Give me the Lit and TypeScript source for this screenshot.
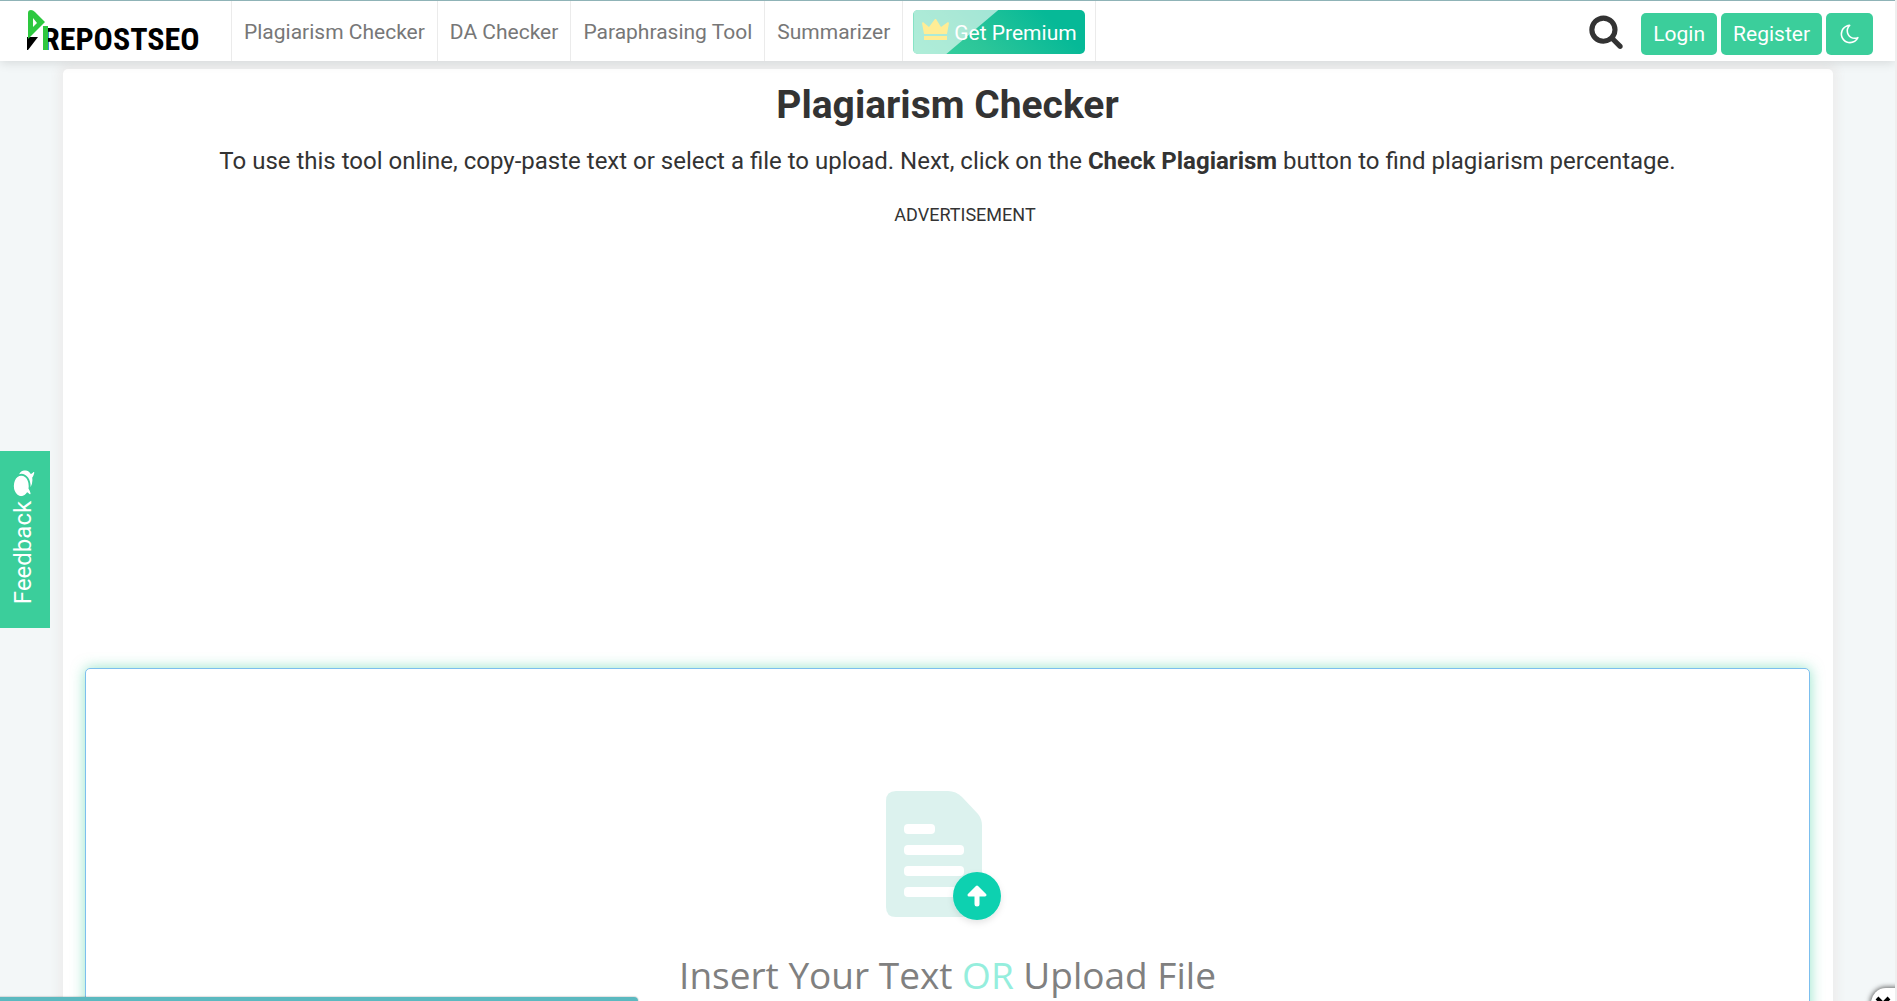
import { LitElement, html, css, svg } from "lit";
import { customElement } from "lit/decorators.js";

const SEARCH = "M1216 832q0-185-131.5-316.5t-316.5-131.5-316.5 131.5-131.5 316.5 131.5 316.5 316.5 131.5 316.5-131.5 131.5-316.5zm512 832q0 52-38 90t-90 38q-54 0-90-38l-343-342q-179 124-399 124-143 0-273.5-55.5t-225-150-150-225-55.5-273.5 55.5-273.5 150-225 225-150 273.5-55.5 273.5 55.5 225 150 150 225 55.5 273.5q0 220-124 399l343 343q37 37 37 90z";
const MOON = "M1390 1303q-54 9-110 9-182 0-337-90t-245-245-90-337q0-192 104-357-201 60-328.5 229t-127.5 384q0 130 51 248.5t136.5 204 204 136.5 248.5 51q144 0 273.5-61.5t220.5-171.5zm203-85q-94 203-283.5 324.5t-413.5 121.5q-156 0-298-61t-245-164-164-245-61-298q0-153 57.5-292.5t156-241.5 235.5-164.5 290-68.5q44-2 61 39 18 41-15 72-86 78-131.5 181.5t-45.5 218.5q0 148 73 273t198 198 273 73q118 0 228-51 41-18 72 13 14 14 17.5 34t-4.5 38z";
const COMMENTS = "M1408 768q0 139-94 257t-256.5 186.5-353.5 68.5q-86 0-176-16-124 88-278 128-36 9-86 16h-3q-11 0-20.5-8t-11.5-21q-1-3-1-6.5t.5-6.5 2-6l2.5-5 3.5-5.5 4-5 4.5-5 4-4.5q5-6 23-25t26-29.5 22.5-29 25-38.5 20.5-44q-124-72-195-177t-71-224q0-139 94-257t256.5-186.5 353.5-68.5 353.5 68.5 256.5 186.5 94 257zm384 256q0 120-71 224.5t-195 176.5q10 24 20.5 44t25 38.5 22.5 29 26 29.5 23 25q1 1 4 4.5t4.5 5 4 5 3.5 5.5l2.5 5 2 6 .5 6.5-1 6.5q-3 14-13 22t-22 7q-50-7-86-16-154-40-278-128-90 16-176 16-271 0-472-132 58 4 88 4 161 0 309-45t264-129q125-92 192-212t67-254q0-77-23-152 129 71 204 178t75 230z";

const icon = (d: string, cls: string) => html`
  <svg class=${cls} viewBox="0 0 1792 1792" aria-hidden="true">${svg`<path d=${d} fill="currentColor"></path>`}</svg>`;

@customElement("site-header")
class SiteHeader extends LitElement {
  static styles = css`
    :host { display: block; position: relative; z-index: 2; }
    .bar {
      display: flex; align-items: stretch; height: 61px; box-sizing: border-box;
      background: #fff; border-top: 1px solid #8fb3b7;
      box-shadow: 0 2px 10px rgba(0, 0, 0, 0.12);
      padding: 0 22px 0 27px;
    }
    .logo { display: flex; align-items: flex-start; width: 204px; box-sizing: border-box; padding-top: 8px; }
    .logo svg { display: block; flex: none; }
    .word { font: bold 32px "Liberation Sans Narrow", "Roboto Condensed", "Liberation Sans", sans-serif; }
    nav { display: flex; flex: 1; border-left: 1px solid #ebebeb; }
    .link {
      display: flex; align-items: center; padding: 2px 12px 0; color: #777;
      text-decoration: none; border-right: 1px solid #ebebeb; font-size: 21px; white-space: nowrap;
    }
    .promo { display: flex; align-items: flex-start; padding: 9px 10px 0; border-right: 1px solid #ebebeb; }
    .premium {
      position: relative; display: flex; align-items: center; gap: 4px; height: 44px; box-sizing: border-box;
      padding: 2px 8px 0; border-radius: 5px; color: #fff; font-size: 21px; text-decoration: none;
      overflow: hidden; white-space: nowrap;
      background: linear-gradient(45deg, #38d39f 0%, #2cc699 35%, #06b997 80%);
    }
    .premium::before {
      content: ""; position: absolute; inset: 0; background: rgba(255, 255, 255, 0.6);
      clip-path: polygon(0 0, 85px 0, 33px 100%, 0 100%);
    }
    .crown { position: relative; width: 29px; height: 24px; margin-bottom: 6px; }
    .tag { position: relative; }
    .actions { display: flex; align-items: flex-start; gap: 4px; padding-top: 12px; }
    button, .btn {
      display: flex; align-items: center; justify-content: center; height: 42px; box-sizing: border-box;
      border: 0; border-radius: 5px; background: #3bce9b; color: #fff;
      font: 21px Roboto, sans-serif; text-decoration: none; padding: 0 12px;
    }
    .find { background: none; color: #333; padding: 0; margin-right: 13px; height: 36px; }
    .lens { width: 36px; height: 36px; }
    .theme { width: 47px; }
    .moon { width: 22px; height: 22px; flex: none; }
  `;
  render() {
    return html`
      <header class="bar">
        <a class="logo" href="#" aria-label="Prepostseo">
          <svg width="190" height="52" viewBox="0 0 190 52">
            <text class="word" x="15" y="41" fill="#000">REPOSTSEO</text>
            <path d="M0 28 H11 L1 41 H0 Z" fill="#000"></path>
            <path fill-rule="evenodd" fill="#2dc83f" d="M1 30 V4 Q1 1 4 1 Q6 1 8 3 L18 13 L1 30 Z M6 9 V18 L10 14 Z"></path>
            <path d="M16 17 H21 V41 H16 Z" fill="#2dc83f"></path>
          </svg>
        </a>
        <nav>
          <a class="link" href="#">Plagiarism Checker</a>
          <a class="link" href="#">DA Checker</a>
          <a class="link" href="#">Paraphrasing Tool</a>
          <a class="link" href="#">Summarizer</a>
          <div class="promo">
            <a class="premium" href="#">
              <svg class="crown" viewBox="0 0 29 24" fill="#ffed95" aria-hidden="true">
                <path d="M3 16 L1 5 L2 4 L8 9 L14 1 L15 1 L20 9 L27 4 L28 5 L26 16 Z M3 18 H26 V22 H3 Z"></path>
              </svg>
              <span class="tag">Get Premium</span>
            </a>
          </div>
        </nav>
        <div class="actions">
          <button class="find" aria-label="Search">${icon(SEARCH, "lens")}</button>
          <a class="btn" href="#">Login</a>
          <a class="btn" href="#">Register</a>
          <button class="theme" aria-label="Dark mode">${icon(MOON, "moon")}</button>
        </div>
      </header>`;
  }
}

@customElement("upload-box")
class UploadBox extends LitElement {
  static styles = css`
    :host { display: block; }
    .box {
      display: grid; min-height: 480px; background: #fff; border: 1px solid #7cbfee; border-radius: 5px;
      box-shadow: 0 0 14px rgba(59, 206, 155, 0.55);
    }
    .box > * { grid-area: 1 / 1; }
    textarea { border: 0; outline: 0; resize: none; background: none; padding: 16px; font: 20px Roboto, sans-serif; }
    .hint {
      display: flex; flex-direction: column; align-items: center; padding-top: 116px; pointer-events: none;
    }
    .file { width: 156px; height: 144px; display: block; }
    .caption {
      margin-top: 19px; font: 37px/54px "Open Sans", "Noto Sans", sans-serif; color: #808080; white-space: nowrap;
    }
    .or { color: #95eedd; }
  `;
  render() {
    return html`
      <div class="box">
        <textarea id="text" spellcheck="false"></textarea>
        <label class="hint" for="text">
          <svg class="file" viewBox="0 0 156 144" aria-hidden="true">
            <defs><filter id="soft" x="-30%" y="-30%" width="160%" height="160%">
              <feDropShadow dx="0" dy="3" stdDeviation="3" flood-opacity="0.1"></feDropShadow>
            </filter></defs>
            <path fill="#dcf2ee" d="M26 6 H78 Q86 6 92 12 L108 29 Q112 34 112 41 V132 H26 Q16 132 16 122 V16 Q16 6 26 6 Z"></path>
            <g fill="#fff">
              <rect x="34" y="39" width="31" height="10" rx="4"></rect>
              <rect x="34" y="60" width="60" height="10" rx="4"></rect>
              <rect x="34" y="81" width="60" height="10" rx="4"></rect>
              <rect x="34" y="102" width="60" height="10" rx="4"></rect>
            </g>
            <circle cx="107" cy="111" r="24" fill="#0fd1b0" filter="url(#soft)"></circle>
            <path d="M107 102 L115 110 H99 Z" fill="#fff" stroke="#fff" stroke-width="3" stroke-linejoin="round"></path>
            <path d="M107 106 V119" stroke="#fff" stroke-width="5" stroke-linecap="round"></path>
          </svg>
          <span class="caption">Insert Your Text <span class="or">OR</span> Upload File</span>
        </label>
      </div>`;
  }
}

@customElement("app-root")
class AppRoot extends LitElement {
  static styles = css`
    :host {
      display: block; position: relative; height: 100vh; overflow: hidden; box-sizing: border-box;
      background: #f3f7f8; color: #333; font-family: Roboto, sans-serif; border-right: 2px solid #efefef;
    }
    main {
      margin: 8px 62px 0 63px; padding: 12px 23px 40px 22px; background: #fff; border-radius: 5px;
      box-shadow: 0 0 10px 5px #ededed;
    }
    h1 { margin: 0; font-size: 39px; line-height: 48px; font-weight: 700; text-align: center; }
    .lead { margin: 16px 0 0; font-size: 24px; line-height: 32px; text-align: center; }
    .ad { height: 456px; margin-top: 24px; padding: 2px 0 0 35px; font-size: 18px; line-height: 24px; text-align: center; box-sizing: border-box; }
    upload-box { margin-top: 11px; }
    .feedback {
      position: absolute; left: 0; top: 451px; width: 50px; height: 177px; border: 0; padding: 0 4px 6px 0;
      background: #3bce9b; color: #fff; font: 24px Roboto, sans-serif;
      display: flex; align-items: center; justify-content: center;
    }
    .turn { display: flex; align-items: center; gap: 5px; transform: rotate(-90deg); white-space: nowrap; }
    .chat { width: 26px; height: 26px; flex: none; }
    .status {
      position: absolute; left: 0; bottom: 0; width: 638px; height: 4px; background: #5bb9c0;
      border-top-right-radius: 4px; box-shadow: 0 0 1px 1px rgba(0, 0, 0, 0.12); z-index: 2;
    }
    .close {
      position: absolute; left: calc(100% - 24px); bottom: -17px; width: 30px; height: 30px; border: 0; padding: 0;
      background: #fff; border-radius: 15px 0 0 0; box-shadow: 0 0 5px 1px rgba(0, 0, 0, 0.6); z-index: 2;
    }
    .cross { display: block; width: 24px; height: 30px; }
  `;
  render() {
    return html`
      <site-header></site-header>
      <main>
        <h1>Plagiarism Checker</h1>
        <p class="lead">
          To use this tool online, copy-paste text or select a file to upload. Next, click on the
          <strong>Check Plagiarism</strong> button to find plagiarism percentage.
        </p>
        <div class="ad">ADVERTISEMENT</div>
        <upload-box></upload-box>
      </main>
      <button class="feedback"><span class="turn">Feedback ${icon(COMMENTS, "chat")}</span></button>
      <div class="status"></div>
      <button class="close" aria-label="Close">
        <svg class="cross" viewBox="0 0 24 30" aria-hidden="true">
          <path d="M6 10 L18 22 M18 10 L6 22" stroke="#000" stroke-width="4"></path>
        </svg>
      </button>`;
  }
}
